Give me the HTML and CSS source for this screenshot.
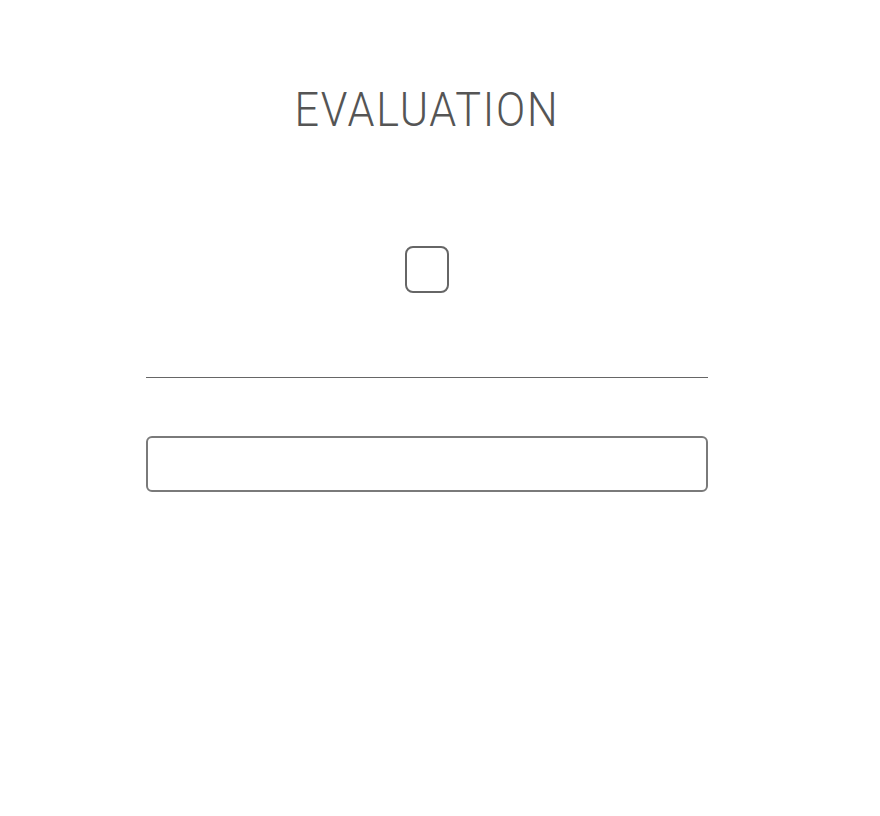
FILE: index.html
```html
<!DOCTYPE html>
<html>
<head>
<meta charset="utf-8">
<link rel="stylesheet" href="styles.css">
</head>
<body>
<div class="wrap">
  <h1 class="title">EVALUATION</h1>
  <div class="check-row"><span class="checkbox"></span></div>
  <hr class="rule">
  <div class="field"></div>
</div>
</body>
</html>
```
FILE: styles.css
```css
html, body { margin: 0; padding: 0; background: #fff; }
body { font-family: Roboto, "Liberation Sans", sans-serif; }
.wrap {
  width: 562px;
  margin-left: 146px;
  display: flex;
  flex-direction: column;
  align-items: stretch;
}
.title {
  margin: 84px 0 0;
  font-weight: 300;
  font-size: 49px;
  line-height: 52px;
  letter-spacing: 2px;
  color: #555;
  text-align: center;
  transform: scaleX(0.88);
}
.check-row {
  display: flex;
  justify-content: center;
  margin-top: 110px;
}
.checkbox {
  width: 40px;
  height: 43px;
  border: 2px solid #666;
  border-radius: 8px;
  display: block;
}
.rule {
  margin: 84px 0 0;
  border: 0;
  height: 1px;
  background: #666;
}
.field {
  margin-top: 58px;
  height: 52px;
  border: 2px solid #7a7a7a;
  border-radius: 6px;
}
```
